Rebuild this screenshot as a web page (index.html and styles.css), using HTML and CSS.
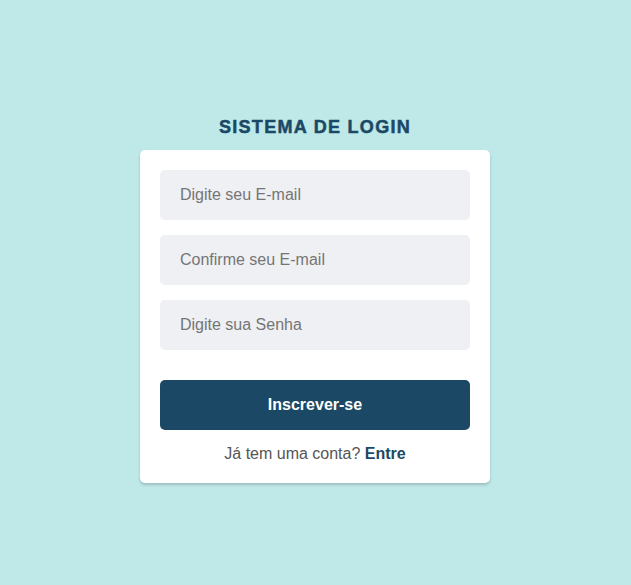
FILE: index.html
```html
<!DOCTYPE html>
<html lang="pt-BR">
<head>
<meta charset="utf-8">
<title>Sistema de Login</title>
<link rel="stylesheet" href="styles.css">
</head>
<body>
<main class="page">
  <h1 class="title">SISTEMA DE LOGIN</h1>
  <form class="card">
    <input class="field" type="email" placeholder="Digite seu E-mail">
    <input class="field" type="email" placeholder="Confirme seu E-mail">
    <input class="field" type="password" placeholder="Digite sua Senha">
    <button class="btn" type="button">Inscrever-se</button>
    <p class="foot">Já tem uma conta? <a class="link" href="#">Entre</a></p>
  </form>
</main>
</body>
</html>
```
FILE: styles.css
```css
* { box-sizing: border-box; }
html, body { margin: 0; padding: 0; }
body {
  background: #bfe8e8;
  font-family: "Liberation Sans", Arial, sans-serif;
}
.page {
  min-height: 585px;
  display: flex;
  flex-direction: column;
  align-items: center;
  padding-top: 117px;
  padding-right: 1px;
}
.title {
  margin: 0 0 12px;
  font-size: 18px;
  line-height: 21px;
  font-weight: 900;
  letter-spacing: 1.3px;
  color: #1b4965;
  -webkit-text-stroke: 0.5px #1b4965;
}
.card {
  width: 350px;
  background: #fff;
  border-radius: 5px;
  padding: 20px;
  display: flex;
  flex-direction: column;
  gap: 15px;
  box-shadow: 0 2px 3px rgba(0,0,0,0.18);
}
.field {
  height: 50px;
  border: none;
  border-radius: 5px;
  background: #eff0f4;
  padding: 0 20px;
  font-family: inherit;
  font-size: 16px;
  color: #333;
  outline: none;
}
.field::placeholder { color: #757575; }
.btn {
  margin-top: 15px;
  height: 50px;
  border: none;
  border-radius: 5px;
  background: #1b4965;
  color: #fff;
  font-family: inherit;
  font-size: 16px;
  font-weight: 700;
}
.foot {
  margin: 0;
  text-align: center;
  font-size: 16px;
  line-height: 18px;
  color: #555;
}
.link {
  color: #1b4965;
  font-weight: 700;
  text-decoration: none;
}
```
